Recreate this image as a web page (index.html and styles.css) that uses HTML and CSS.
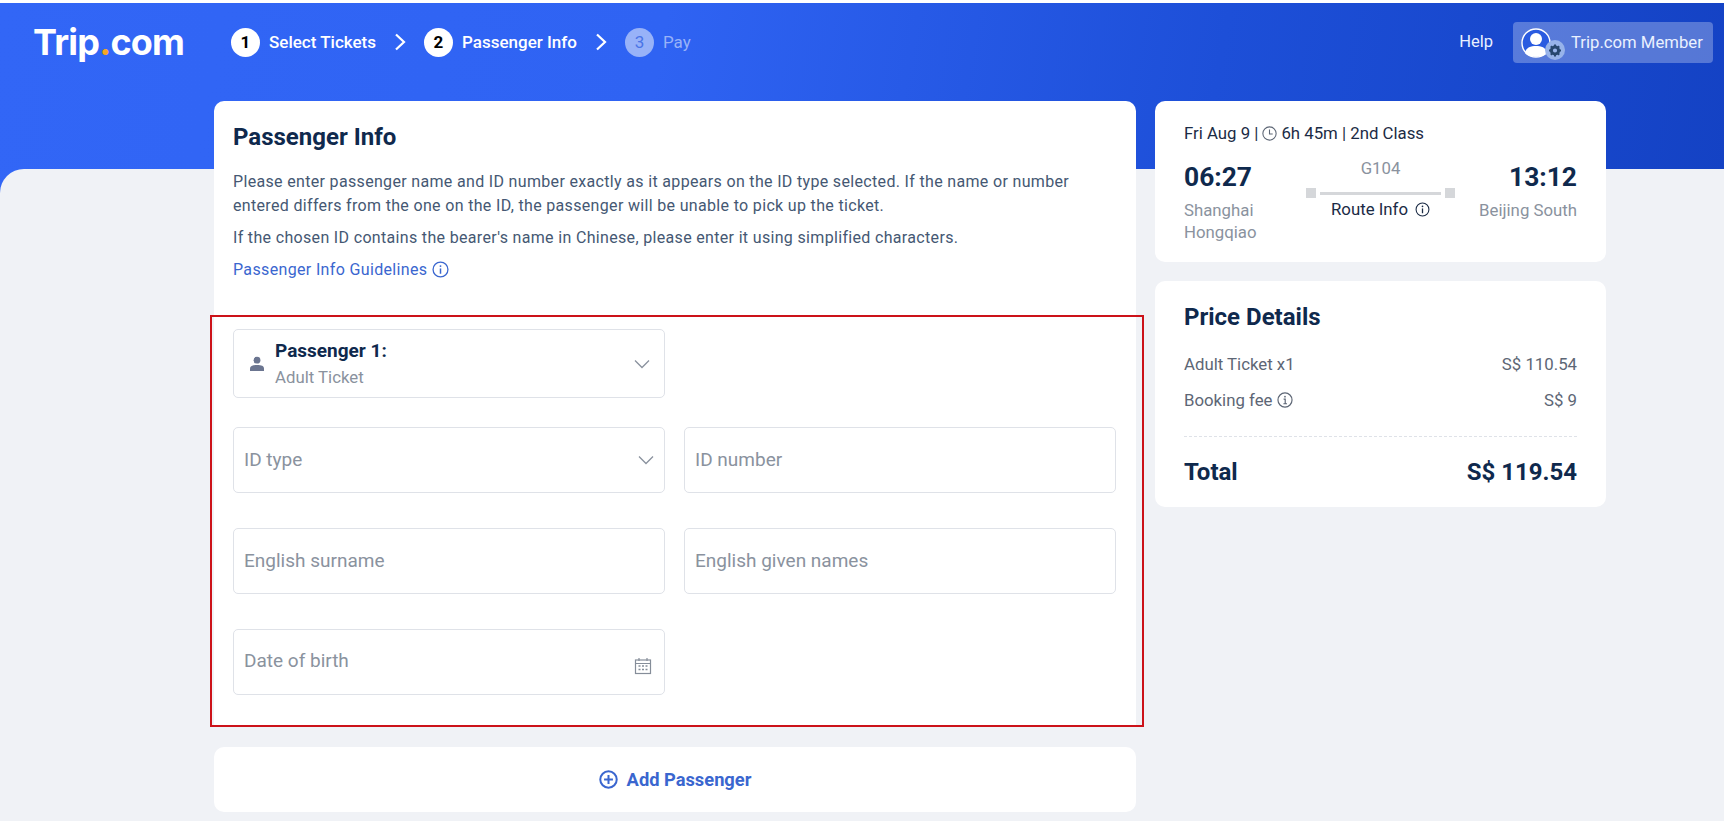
FILE: index.html
```html
<!DOCTYPE html>
<html lang="en">
<head>
    <meta charset="UTF-8">
    <meta name="viewport" content="width=device-width, initial-scale=1.0">
    <title>Passenger Info - Trip.com</title>
    <link rel="stylesheet" href="styles.css">
</head>
<body>
    <div class="hero">
        <div class="logo">Trip<span class="logo-dot">.</span>com</div>
        <div class="steps">
            <div class="step-num">1</div>
            <div class="step-label">Select Tickets</div>
            <svg class="step-arrow" width="12" height="18" viewBox="0 0 12 18"><path d="M2 1.5 L10 9 L2 16.5" fill="none" stroke="#fff" stroke-width="2.2"/></svg>
            <div class="step-num">2</div>
            <div class="step-label">Passenger Info</div>
            <svg class="step-arrow" width="12" height="18" viewBox="0 0 12 18"><path d="M2 1.5 L10 9 L2 16.5" fill="none" stroke="#fff" stroke-width="2.2"/></svg>
            <div class="step-num step-num-off">3</div>
            <div class="step-label step-label-off">Pay</div>
        </div>
        <a class="help-link">Help</a>
        <div class="member">
            <div class="avatar">
                <svg width="46" height="36" viewBox="0 0 46 36">
                    <circle cx="15" cy="18" r="14" fill="#2a5be0" stroke="#fff" stroke-width="1.4"/>
                    <circle cx="15" cy="14" r="6" fill="#fff"/>
                    <path d="M4 28 C5 22 10 21 15 21 C20 21 25 22 26 28 C22 33 8 33 4 28 Z" fill="#fff"/>
                    <circle cx="34" cy="25" r="10" fill="#97b3ea"/>
                    <circle cx="34" cy="25.5" r="3.6" fill="none" stroke="#27476f" stroke-width="3"/>
                    <path d="M34 19.5 V22 M34 29 V31.5 M28 25.5 H30.5 M37.5 25.5 H40 M29.8 21.3 L31.5 23 M36.5 28 L38.2 29.7 M38.2 21.3 L36.5 23 M31.5 28 L29.8 29.7" stroke="#27476f" stroke-width="2"/>
                </svg>
            </div>
            <span>Trip.com Member</span>
        </div>
    </div>

    <div class="content">
        <div class="columns">
            <div class="left-col">
                <div class="card main-card">
                    <h1>Passenger Info</h1>
                    <p>Please enter passenger name and ID number exactly as it appears on the ID type selected. If the name or number entered differs from the one on the ID, the passenger will be unable to pick up the ticket.</p>
                    <p>If the chosen ID contains the bearer's name in Chinese, please enter it using simplified characters.</p>
                    <a class="guide-link">Passenger Info Guidelines
                        <svg width="17" height="17" viewBox="0 0 16 16"><circle cx="8" cy="8" r="7" fill="none" stroke="#3a66cf" stroke-width="1.2"/><path d="M8 7 V12" stroke="#3a66cf" stroke-width="1.4"/><circle cx="8" cy="4.8" r="0.9" fill="#3a66cf"/></svg>
                    </a>

                    <div class="passenger-select">
                        <svg class="person-icon" width="16" height="16" viewBox="0 0 16 16"><circle cx="8" cy="4.2" r="3.4" fill="#6b7590"/><path d="M1 15 V12.5 C1 10 3.5 9 8 9 C12.5 9 15 10 15 12.5 V15 Z" fill="#6b7590"/></svg>
                        <div class="passenger-text">
                            <div class="passenger-name">Passenger 1:</div>
                            <div class="passenger-type">Adult Ticket</div>
                        </div>
                        <svg class="chevron" width="16" height="10" viewBox="0 0 16 10"><path d="M1 1.5 L8 8.5 L15 1.5" fill="none" stroke="#8a929e" stroke-width="1.3"/></svg>
                    </div>

                    <div class="field-grid">
                        <div class="field"><span class="field-text">ID type</span>
                            <svg class="chevron chevron-id" width="16" height="10" viewBox="0 0 16 10"><path d="M1 1.5 L8 8.5 L15 1.5" fill="none" stroke="#8a929e" stroke-width="1.3"/></svg>
                        </div>
                        <div class="field"><span class="field-text">ID number</span></div>
                        <div class="field"><span class="field-text">English surname</span></div>
                        <div class="field"><span class="field-text">English given names</span></div>
                        <div class="field"><span class="field-text field-text-date">Date of birth</span>
                            <svg class="calendar" width="18" height="18" viewBox="0 0 18 18">
                                <rect x="1.5" y="3" width="15" height="13.5" fill="none" stroke="#858d99" stroke-width="1.2"/>
                                <path d="M1.5 6.5 H16.5 M5 1 V4 M13 1 V4" stroke="#858d99" stroke-width="1.2"/>
                                <path d="M4.5 9 H6.5 M8 9 H10 M11.5 9 H13.5 M4.5 12.5 H6.5 M8 12.5 H10 M11.5 12.5 H13.5" stroke="#858d99" stroke-width="1.4"/>
                            </svg>
                        </div>
                    </div>

                    <div class="red-box"></div>
                </div>

                <div class="card add-card">
                    <svg width="19" height="19" viewBox="0 0 18 18"><circle cx="9" cy="9" r="7.8" fill="none" stroke="#3a66cf" stroke-width="1.9"/><path d="M9 4.8 V13.2 M4.8 9 H13.2" stroke="#3a66cf" stroke-width="1.9"/></svg>
                    <span>Add Passenger</span>
                </div>
            </div>

            <div class="right-col">
                <div class="card route-card">
                    <div class="route-meta">Fri Aug 9 |
                        <svg width="15" height="15" viewBox="0 0 14 14"><circle cx="7" cy="7" r="6.2" fill="none" stroke="#5d6675" stroke-width="1"/><path d="M7 3.2 V7.4 H10" fill="none" stroke="#5d6675" stroke-width="1"/></svg>
                        6h 45m | 2nd Class</div>
                    <div class="route-row">
                        <div class="route-end">
                            <div class="route-time">06:27</div>
                            <div class="route-station">Shanghai Hongqiao</div>
                        </div>
                        <div class="route-mid">
                            <div class="train-no">G104</div>
                            <div class="route-line">
                                <span class="route-dot"></span>
                                <span class="route-bar"></span>
                                <span class="route-dot"></span>
                            </div>
                            <div class="route-info">Route Info
                                <svg width="15" height="15" viewBox="0 0 14 14"><circle cx="7" cy="7" r="6" fill="none" stroke="#1b2b45" stroke-width="1"/><path d="M7 6 V10.5" stroke="#1b2b45" stroke-width="1.2"/><circle cx="7" cy="4" r="0.8" fill="#1b2b45"/></svg>
                            </div>
                        </div>
                        <div class="route-end route-end-right">
                            <div class="route-time">13:12</div>
                            <div class="route-station">Beijing South</div>
                        </div>
                    </div>
                </div>

                <div class="card price-card">
                    <h2>Price Details</h2>
                    <div class="price-row"><span>Adult Ticket x1</span><span>S$ 110.54</span></div>
                    <div class="price-row"><span class="fee-label">Booking fee
                        <svg width="16" height="16" viewBox="0 0 15 15"><circle cx="7.5" cy="7.5" r="6.6" fill="none" stroke="#5d6675" stroke-width="1.1"/><path d="M6.2 6.6 H7.7 V11 M6 11 H9.4" fill="none" stroke="#5d6675" stroke-width="1.1"/><circle cx="7.5" cy="4.4" r="0.8" fill="#5d6675"/></svg>
                    </span><span>S$ 9</span></div>
                    <div class="total-row"><span>Total</span><span>S$ 119.54</span></div>
                </div>
            </div>
        </div>
    </div>
</body>
</html>
```

FILE: styles.css
```css
body {
    font-family: Roboto, "Liberation Sans", sans-serif;
    margin: 0;
    padding-top: 3px;
    height: 821px;
    box-sizing: border-box;
    overflow: hidden;
    background-color: #fff;
    color: #0f294d;
}
.hero {
    height: 190px;
    box-sizing: border-box;
    background: linear-gradient(100deg, #3266f6 0%, #2f63f3 38%, #1d4fd8 70%, #1442c4 100%);
    display: flex;
    align-items: flex-start;
    padding: 19px 11px 0 33px;
    color: #fff;
}
.logo {
    font-family: Inter, sans-serif;
    font-size: 36px;
    font-weight: 700;
    line-height: 40px;
    letter-spacing: -0.8px;
    width: 198px;
    flex: none;
}
.logo-dot {
    color: #f5a623;
}
.steps {
    display: flex;
    align-items: center;
    height: 40px;
}
.step-num {
    width: 29px;
    height: 29px;
    border-radius: 50%;
    background-color: #fff;
    color: #000;
    font-size: 17px;
    font-weight: 700;
    display: flex;
    align-items: center;
    justify-content: center;
    margin-right: 9px;
}
.step-num-off {
    background-color: #98b2f8;
    color: #4a74e6;
    font-weight: 400;
}
.step-label {
    font-size: 17px;
    font-weight: 500;
}
.step-label-off {
    color: #98b2f8;
    font-weight: 400;
}
.step-arrow {
    margin: 0 18px 0 18px;
}
.help-link {
    margin-left: auto;
    margin-right: 20px;
    font-size: 16.5px;
    line-height: 40px;
    color: #e8f0ff;
}
.member {
    display: flex;
    align-items: center;
    width: 200px;
    height: 41px;
    box-sizing: border-box;
    padding-left: 8px;
    border-radius: 4px;
    background-color: rgba(255, 255, 255, 0.28);
    font-size: 16.7px;
    color: #eaf1ff;
}
.avatar {
    width: 46px;
    height: 36px;
    margin-right: 4px;
    flex: none;
}
.content {
    margin-top: -24px;
    height: 652px;
    box-sizing: border-box;
    padding-left: 214px;
    background-color: #f0f2f6;
    border-top-left-radius: 24px;
}
.columns {
    display: flex;
    gap: 19px;
    position: relative;
    top: -68px;
}
.left-col {
    width: 922px;
    flex: none;
}
.right-col {
    width: 451px;
    flex: none;
}
.card {
    background-color: #fff;
    border-radius: 10px;
}
.main-card {
    position: relative;
    height: 625px;
    box-sizing: border-box;
    padding: 21px 20px 0 19px;
    border-radius: 10px 10px 0 0;
}
h1 {
    margin: 0 0 18px 0;
    font-size: 24px;
    line-height: 30px;
    font-weight: 700;
}
.main-card p {
    margin: 0 0 8px 0;
    font-size: 16px;
    line-height: 24px;
    letter-spacing: 0.33px;
    color: #455873;
}
.guide-link {
    display: flex;
    align-items: center;
    gap: 5px;
    height: 24px;
    margin-top: -1px;
    font-size: 16px;
    letter-spacing: 0.35px;
    color: #3a66cf;
}
.passenger-select {
    margin-top: 48px;
    width: 432px;
    height: 69px;
    box-sizing: border-box;
    border: 1px solid #dfe2e8;
    border-radius: 5px;
    display: flex;
    align-items: center;
    padding: 0 14px 0 15px;
}
.person-icon {
    flex: none;
    margin-right: 10px;
}
.passenger-text {
    flex: 1;
}
.passenger-name {
    font-size: 19px;
    line-height: 24px;
    font-weight: 700;
}
.passenger-type {
    margin-top: 3px;
    font-size: 16.8px;
    line-height: 22px;
    color: #8a929e;
}
.field-grid {
    margin-top: 29px;
    display: grid;
    grid-template-columns: 432px 432px;
    column-gap: 19px;
    row-gap: 35px;
}
.field {
    position: relative;
    height: 66px;
    box-sizing: border-box;
    border: 1px solid #dfe2e8;
    border-radius: 5px;
    display: flex;
    align-items: center;
    padding: 0 10px;
    font-size: 19px;
    color: #8a929e;
}
.field-text {
    margin-bottom: 2px;
}
.field-text-date {
    margin-bottom: 4px;
}
.chevron-id {
    margin-left: auto;
}
.calendar {
    margin-left: auto;
    margin-top: 8px;
    margin-right: 2px;
}
.red-box {
    position: absolute;
    left: -4px;
    top: 214px;
    width: 934px;
    height: 412px;
    box-sizing: border-box;
    border: 2px solid #cc1219;
}
.add-card {
    margin-top: 21px;
    height: 65px;
    display: flex;
    align-items: center;
    justify-content: center;
    gap: 9px;
    font-size: 18.3px;
    font-weight: 700;
    color: #3a66cf;
}
.route-card {
    height: 161px;
    box-sizing: border-box;
    padding: 21px 29px 0 29px;
}
.route-meta {
    display: flex;
    align-items: center;
    gap: 4px;
    font-size: 16.8px;
    line-height: 22px;
    color: #1b2b45;
}
.route-row {
    display: flex;
    margin-top: 17px;
}
.route-end {
    width: 122px;
    flex: none;
}
.route-end-right {
    text-align: right;
}
.route-time {
    font-size: 26.4px;
    line-height: 32px;
    font-weight: 700;
}
.route-station {
    margin-top: 6px;
    font-size: 16.8px;
    line-height: 22px;
    color: #8a929e;
}
.route-mid {
    flex: 1;
    text-align: center;
    margin-top: -4px;
}
.train-no {
    font-size: 16.8px;
    line-height: 22px;
    color: #8a929e;
}
.route-line {
    display: flex;
    align-items: center;
    justify-content: center;
    gap: 4px;
    height: 12px;
    margin-top: 8px;
}
.route-dot {
    width: 10px;
    height: 10px;
    background-color: #d5d7da;
}
.route-bar {
    width: 121px;
    height: 3px;
    background-color: #d5d7da;
}
.route-info {
    display: flex;
    align-items: center;
    justify-content: center;
    gap: 7px;
    margin-top: -1px;
    font-size: 16.8px;
    line-height: 22px;
    color: #1b2b45;
}
.price-card {
    margin-top: 19px;
    height: 226px;
    box-sizing: border-box;
    padding: 21px 29px 0 29px;
}
h2 {
    margin: 0 0 20px 0;
    font-size: 24px;
    line-height: 30px;
    font-weight: 700;
}
.price-row {
    display: flex;
    justify-content: space-between;
    align-items: center;
    font-size: 16.8px;
    line-height: 24px;
    margin-bottom: 12px;
    color: #5d6675;
}
.fee-label {
    display: flex;
    align-items: center;
    gap: 5px;
}
.total-row {
    display: flex;
    justify-content: space-between;
    margin-top: 24px;
    padding-top: 20px;
    border-top: 1px dashed #dfe2e8;
    font-size: 24px;
    line-height: 30px;
    font-weight: 700;
}
```
